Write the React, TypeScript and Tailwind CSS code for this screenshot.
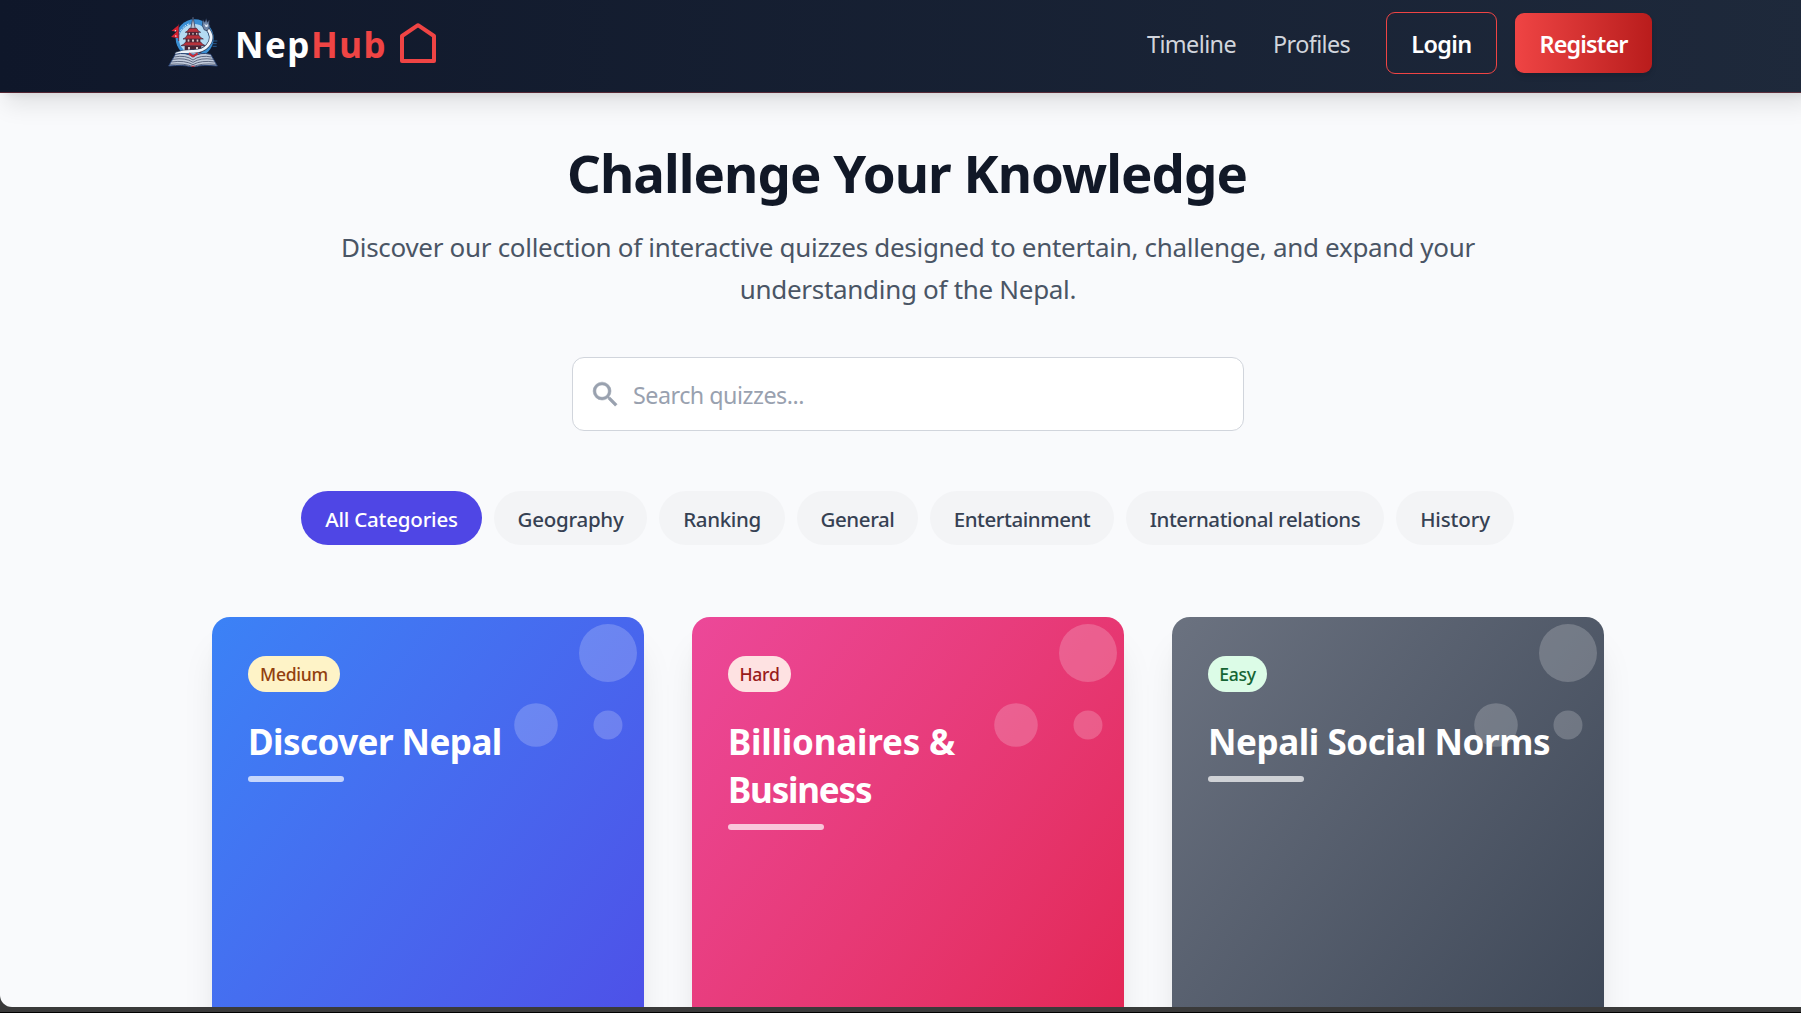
import { MdSearch } from "react-icons/md";

function Logo() {
  return (
    <svg viewBox="12 12 150 150" className="-mt-[3px] h-[50px] w-[50px] shrink-0">
      <circle cx="92" cy="76" r="57" fill="#3a8fd4" />
      <circle cx="90" cy="78" r="45" fill="#b4dbf3" />
      <path d="M44 70a45 45 0 0 1 34-38" fill="none" stroke="#e6f3fb" strokeWidth="3" strokeDasharray="5 4" />
      <path d="M146 84h14M142 92h16M146 100h12" stroke="#2c6aa5" strokeWidth="2.5" />
      {/* prayer flag */}
      <path d="M44 36 22 54l17 1-18 17 23 4z" fill="#d3202f" />
      <path d="M44 34v50" stroke="#7a1f33" strokeWidth="2.5" />
      <path d="m33 50 4 4-5 2zM35 66l4 4-6 1z" fill="#fff" />
      {/* pagoda */}
      <path d="m87 12-7 36h14z" fill="#b9c0cf" stroke="#3b4560" strokeWidth="2.5" />
      <path d="M70 56h34v12H70zM65 76h44v14H65zM62 98h50v22H62z" fill="#4a2534" />
      <path d="M74 59h4v7h-4zM85 59h4v7h-4zM96 59h4v7h-4zM71 79h5v9h-5zM84 79h6v9h-6zM98 79h5v9h-5zM72 102h6v14h-6zM96 102h6v14h-6z" fill="#d9c5c4" />
      <path d="M64 58q8-3 12-12h22q4 9 12 12zM57 78q9-3 13-12h34q5 9 14 12zM51 98q9-3 14-11h45q5 8 14 11z" fill="#b8323b" stroke="#3a2439" strokeWidth="2" />
      {/* serpent */}
      <path d="M129 46q24 26 2 52-14 17-42 17-30-1-51 7" fill="none" stroke="#34425f" strokeWidth="12" strokeLinecap="round" />
      <path d="M129 46q24 26 2 52-14 17-42 17-30-1-51 7" fill="none" stroke="#eef4fa" strokeWidth="8" strokeLinecap="round" />
      <path d="m117 20 5 8 5-11 3 11 6-7-1 13 3 5-8 14-9-2-6-13z" fill="#6f86a8" stroke="#24304c" strokeWidth="2" />
      <path d="m121 33 6 3 6-3-3 9h-5z" fill="#dfe8f2" />
      {/* open book */}
      <path d="M34 124q32-8 53 8 21-16 53-8l20 35q-48-4-66 2l-7 4-7-4q-20-6-66-2z" fill="#c3cddd" stroke="#2b4575" strokeWidth="3" />
      <path d="M31 132q34-7 56 9 22-16 56-9M27 139q37-6 60 9 23-15 60-9M22 147q41-6 65 8 24-14 65-8M18 154q44-4 69 7 25-11 69-7" fill="none" stroke="#48536d" strokeWidth="2.5" />
      <path d="m75 121 12 9 14-9" fill="none" stroke="#c92c37" strokeWidth="6" />
      <path d="M81 158h12l-6 9z" fill="#a52b3c" />
    </svg>
  );
}

function Header() {
  return (
    <header className="relative z-10 h-[93px] border-b border-[#ef4444]/30 bg-linear-to-r from-[#0f172a] to-[#1e293b] shadow-[0_15px_22.5px_-4.5px_rgb(0_0_0/0.1),0_6px_9px_-6px_rgb(0_0_0/0.1)]">
      <div className="mx-auto flex h-full w-[1488px] items-center justify-between pb-1.5 pl-1">
        <div className="flex items-center">
          <Logo />
          <span className="ml-[17px] pt-1 text-[35px] leading-[54px] font-bold tracking-[1.5px] text-white">
            Nep<span className="text-[#ef4444]">Hub</span>
          </span>
          <svg viewBox="0 0 36 40" className="ml-[13px] h-10 w-9" fill="none" stroke="#ef4444" strokeWidth="4" strokeLinejoin="round">
            <path d="M2 13 18 2.2 34 13v25H2z" />
          </svg>
        </div>
        <nav className="flex items-center text-[23.4px] leading-9">
          <a className="mr-9 w-[90px] pt-0.5 tracking-[-0.6px] text-gray-300">Timeline</a>
          <a className="mr-[35px] w-[78px] pt-0.5 tracking-[-0.6px] text-gray-300">Profiles</a>
          <a className="mr-[18px] flex h-[62px] w-[111px] items-center justify-center rounded-[9px] border border-[#ef4444] pt-0.5 font-semibold tracking-[-0.6px] text-white">Login</a>
          <a className="flex h-[60px] w-[137px] items-center justify-center rounded-[9px] bg-linear-to-r from-[#ef4444] to-[#b91c1c] pt-0.5 font-semibold tracking-[-0.85px] text-white shadow-md">Register</a>
        </nav>
      </div>
    </header>
  );
}

const categories = [
  { label: "All Categories", className: "w-[181px] bg-[#4f46e5] text-white tracking-[-0.2px]" },
  { label: "Geography", className: "w-[153px] bg-gray-100 text-gray-700 tracking-[-0.25px]" },
  { label: "Ranking", className: "w-[126px] bg-gray-100 text-gray-700 tracking-[-0.35px]" },
  { label: "General", className: "w-[121px] bg-gray-100 text-gray-700 tracking-[-0.4px]" },
  { label: "Entertainment", className: "w-[184px] bg-gray-100 text-gray-700 tracking-[-0.45px]" },
  { label: "International relations", className: "w-[258px] bg-gray-100 text-gray-700 tracking-[-0.42px]" },
  { label: "History", className: "w-[118px] bg-gray-100 text-gray-700 tracking-[-0.15px]" },
];

const quizzes = [
  {
    level: "Medium",
    badge: "w-[92px] bg-[#fef3c7] text-[#92400e]",
    lines: ["Discover Nepal"],
    title: "tracking-[-0.55px]",
    gradient: "from-[#3b82f6] to-[#4f46e5]",
  },
  {
    level: "Hard",
    badge: "w-[63px] bg-[#fee2e2] text-[#991b1b]",
    lines: ["Billionaires &", "Business"],
    title: "tracking-[-0.2px] [&>span+span]:tracking-[-1.2px]",
    gradient: "from-[#ec4899] to-[#e11d48]",
  },
  {
    level: "Easy",
    badge: "w-[59px] bg-[#dcfce7] text-[#166534]",
    lines: ["Nepali Social Norms"],
    title: "tracking-[-0.43px]",
    gradient: "from-[#6b7280] to-[#374151]",
  },
];

function QuizCard({ quiz }: { quiz: (typeof quizzes)[number] }) {
  return (
    <article className={`relative h-[576px] rounded-[18px] bg-linear-to-br px-9 pt-[39px] shadow-[0_30px_37.5px_-7.5px_rgb(0_0_0/0.1),0_12px_15px_-9px_rgb(0_0_0/0.1)] ${quiz.gradient}`}>
      <svg viewBox="0 0 144 144" className="absolute top-0 right-0 h-36 w-36" fill="#fff" fillOpacity="0.2">
        <circle cx="108" cy="36" r="29" />
        <circle cx="36" cy="108" r="21.8" />
        <circle cx="108" cy="108" r="14.5" />
      </svg>
      <div className={`relative flex h-9 items-center justify-center rounded-full text-[17.6px] leading-6 font-medium tracking-[-0.3px] ${quiz.badge}`}>{quiz.level}</div>
      <h2 className={`relative mt-[26px] text-[35px] leading-[48px] font-bold whitespace-nowrap text-white ${quiz.title}`}>
        {quiz.lines.map((line) => (
          <span key={line} className="block">{line}</span>
        ))}
      </h2>
      <div className="mt-[10px] h-1.5 w-24 rounded-full bg-white/70" />
    </article>
  );
}

export default function App() {
  return (
    <div className="h-[1013px] w-full overflow-hidden border-b border-black bg-[#3a3a3a] font-['Noto_Sans',sans-serif]">
      <div className="h-[1007px] w-full overflow-hidden rounded-bl-[12px] bg-[#f9fafb]">
        <div className="w-[1816px] bg-[#f9fafc]">
          <Header />
          <main className="mx-auto flex w-[1392px] flex-col items-center pt-[50px]">
            <h1 className="mr-0.5 text-[52.8px] leading-[60px] font-bold tracking-[-0.95px] text-[#111827]">Challenge Your Knowledge</h1>
            <p className="mt-[23px] text-center text-[26px] leading-[42px] tracking-[-0.3px] text-gray-600">
              Discover our collection of interactive quizzes designed to entertain, challenge, and expand your
              <br />
              understanding of the Nepal.
            </p>
            <div className="mt-[47px] flex h-[74px] w-[672px] items-center rounded-xl border border-gray-300 bg-white pl-4">
              <MdSearch className="text-[33px] text-gray-400 [&>path:last-child]:stroke-current [&>path:last-child]:stroke-[0.4]" />
              <span className="ml-[11px] pt-0.5 text-[23.3px] leading-9 tracking-[-0.5px] text-gray-400">Search quizzes...</span>
            </div>
            <div className="mt-[60px] mr-px flex gap-3">
              {categories.map((c) => (
                <button key={c.label} className={`flex h-[54px] items-center justify-center rounded-full pt-0.5 text-[20.5px] leading-[30px] font-medium whitespace-nowrap ${c.className}`}>
                  {c.label}
                </button>
              ))}
            </div>
            <section className="mt-[72px] grid w-full grid-cols-3 gap-12">
              {quizzes.map((q) => (
                <QuizCard key={q.level} quiz={q} />
              ))}
            </section>
          </main>
        </div>
      </div>
    </div>
  );
}
